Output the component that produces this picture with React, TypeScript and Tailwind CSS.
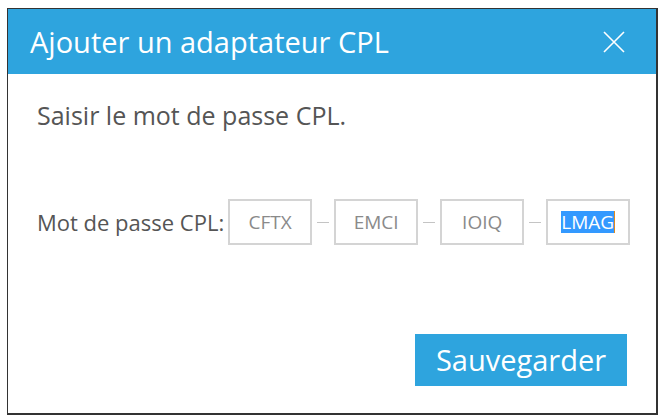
import React from "react";

const codes = ["CFTX", "EMCI", "IOIQ"];

const CodeBox = ({ value, selected }: { value: string; selected?: boolean }) => (
  <div className="flex h-[46px] w-[84px] shrink-0 items-center justify-center border-2 border-[#d4d4d4] bg-white text-[19px] text-[#8a8a8a]">
    {selected ? (
      <span className="flex items-center">
        <span className="bg-[#3399ff] leading-[22px] text-white">{value}</span>
        <span className="h-[22px] w-px bg-[#e08a1e]" />
      </span>
    ) : (
      value
    )}
  </div>
);

const Dash = () => <div className="mx-[5px] h-px w-[12px] shrink-0 bg-[#c4c4c4]" />;

export default function App() {
  return (
    <div className="h-[418px] w-[665px] bg-white pl-[7px] pt-[8px] font-['Open_Sans','DejaVu_Sans',sans-serif]">
      <div className="flex h-[407px] w-[651px] flex-col border border-b-2 border-r-2 border-[#333]">
        <div className="flex h-[65px] items-center justify-between bg-[#2ea4de] pl-[22px] pr-[31px]">
          <h1 className="text-[29px] font-normal leading-[40px] text-white">Ajouter un adaptateur CPL</h1>
          <svg width="22" height="22" viewBox="0 0 22 22" stroke="white" strokeWidth="1.6" fill="none">
            <path d="M1 1L21 21M21 1L1 21" />
          </svg>
        </div>
        <div className="flex flex-1 flex-col px-[29px]">
          <p className="mt-[25px] text-[25px] leading-[32px] text-[#555]">Saisir le mot de passe CPL.</p>
          <div className="mt-[68px] flex items-center">
            <span className="mr-[4px] shrink-0 whitespace-nowrap text-[22px] leading-[30px] text-[#555]">Mot de passe CPL:</span>
            {codes.map((c) => (
              <React.Fragment key={c}>
                <CodeBox value={c} />
                <Dash />
              </React.Fragment>
            ))}
            <CodeBox value="LMAG" selected />
          </div>
          <div className="mt-[89px] flex justify-end">
            <button className="h-[52px] w-[212px] bg-[#2ea4de] text-[29px] text-white">Sauvegarder</button>
          </div>
        </div>
      </div>
    </div>
  );
}
